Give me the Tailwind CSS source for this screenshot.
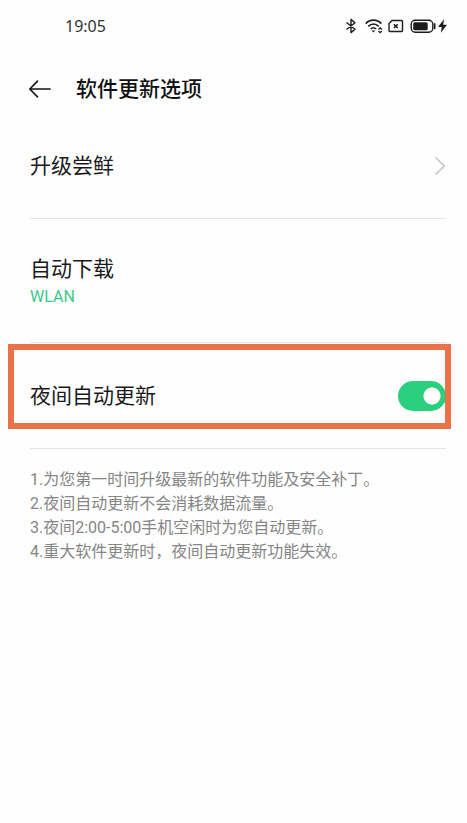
<!DOCTYPE html>
<html lang="zh-CN">
<head>
<meta charset="utf-8">
<meta name="viewport" content="width=device-width, initial-scale=1">
<title>软件更新选项</title>
<script src="https://cdn.jsdelivr.net/npm/@tailwindcss/browser@4"></script>
</head>
<body class="min-h-screen bg-[#fefefe] font-[Roboto,'Noto_Sans_CJK_SC',sans-serif] text-[#1a1a1a]">
  <div class="mb-3 flex h-[52px] items-center justify-between pr-5 pl-[65px]">
    <time class="font-['Noto_Sans',sans-serif] text-base leading-6 text-[#333]">19:05</time>
    <div class="flex items-center text-[#1c1c1c]">
      <svg class="mr-2 h-4 w-3" viewBox="0 0 12 16" fill="none" stroke="currentColor" stroke-width="1.4" stroke-linejoin="round" aria-hidden="true"><path d="M1.5 4.5 10 11.3 6 14.6V1.4L10 4.7 1.5 11.5"/></svg>
      <svg class="mr-1 h-4 w-[19px]" viewBox="0 0 19 16" fill="none" stroke="currentColor" stroke-width="1.7" aria-hidden="true"><path d="M.7 5.6C5 1 12 1 16.300 5.600M3.300 8.400C6.400 5.200 10.600 5.200 13.700 8.400M5.800 11C7.500 9.300 9.500 9.300 11.100 11"/><path d="M6.700 12.600 8.500 14.500 10.300 12.600Z" fill="currentColor" stroke="none"/><path d="M13.500 11.500 15.200 9.900 16.900 11.500M13.500 13 15.200 14.600 16.900 13" stroke-width="1.300"/></svg>
      <svg class="mr-1.5 h-4 w-4" viewBox="0 0 16 16" fill="none" stroke="currentColor" stroke-width="1.4" stroke-linejoin="round" aria-hidden="true"><path d="M4 2.500H13.500a1 1 0 0 1 1 1V12.500a1 1 0 0 1-1 1H2a1 1 0 0 1-1-1V5.500Z"/><path d="M5.900 6.200 9.700 10M9.700 6.200 5.900 10" stroke-width="1.500"/></svg>
      <svg class="mr-px h-4 w-[27px]" viewBox="0 0 27 16" fill="none" stroke="currentColor" aria-hidden="true"><rect x="1.200" y="2.200" width="21.600" height="12" rx="4" stroke-width="1.400"/><rect x="3.200" y="4.200" width="14.500" height="8" rx="1.500" fill="currentColor" stroke="none"/><path d="M24.700 5.800V10.600" stroke-width="1.600" stroke-linecap="round"/></svg>
      <svg class="h-4 w-[9px]" viewBox="0 0 9 16" fill="currentColor" aria-hidden="true"><path d="M6 1.200 0 9H3.700L2.900 14.800 9 6.700H5.200Z"/></svg>
    </div>
  </div>

  <header class="flex h-[49px] items-center gap-6 pl-7">
    <button type="button" aria-label="返回" class="flex h-6 w-6 items-center justify-center text-[#151515]">
      <svg class="h-6 w-6" viewBox="0 0 24 24" fill="none" stroke="currentColor" stroke-width="1.700" stroke-linecap="round" stroke-linejoin="round" aria-hidden="true"><path d="M22 12H1.800M9.500 4.200 1.800 12 9.500 19.800"/></svg>
    </button>
    <h1 class="text-[21px] leading-8 font-medium text-[#111]">软件更新选项</h1>
  </header>

  <main class="pr-[21px] pl-[30px]">
    <a href="#" class="flex h-[106px] items-center justify-between border-b border-[#e4e4e4]">
      <span class="text-[21px] leading-8">升级尝鲜</span>
      <svg class="h-5 w-3" viewBox="0 0 12 20" fill="none" stroke="#c4c4c4" stroke-width="1.600" aria-hidden="true"><path d="M1.500 1.500 10.300 10 1.500 18.500"/></svg>
    </a>
    <a href="#" class="flex h-[124px] flex-col justify-center border-b border-[#e4e4e4]">
      <span class="text-[21px] leading-8">自动下载</span>
      <span class="text-base leading-6 text-[#3cc88c]">WLAN</span>
    </a>
    <div class="relative flex h-[106px] items-center justify-between border-b border-[#e4e4e4]">
      <label for="night" class="text-[21px] leading-8">夜间自动更新</label>
      <input id="night" type="checkbox" role="switch" checked class="h-[30px] w-12 appearance-none rounded-full bg-[#c8c8c8] bg-[radial-gradient(circle_at_14px_50%,white_8px,transparent_9px)] checked:bg-[#2bd07f] checked:bg-[radial-gradient(circle_at_34px_50%,white_8px,transparent_9px)]">
      <div class="pointer-events-none absolute top-px -right-[5px] bottom-[19px] -left-[22px] border-6 border-[#ea7248]"></div>
    </div>
    <ol class="mt-[19px] text-base leading-6 text-[#858585]">
      <li>1.为您第一时间升级最新的软件功能及安全补丁。</li>
      <li>2.夜间自动更新不会消耗数据流量。</li>
      <li>3.夜间2:00-5:00手机空闲时为您自动更新。</li>
      <li>4.重大软件更新时，夜间自动更新功能失效。</li>
    </ol>
  </main>
</body>
</html>
